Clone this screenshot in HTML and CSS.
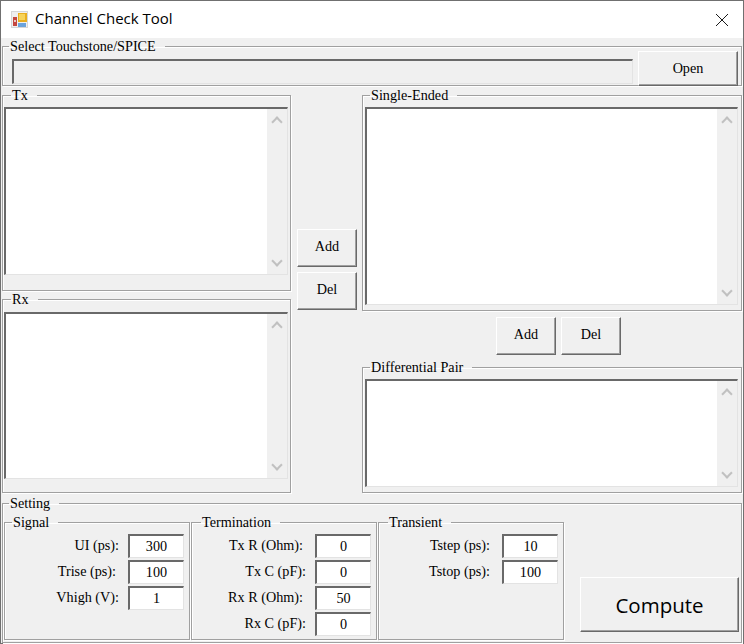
FILE: index.html
```html
<!DOCTYPE html>
<html>
<head>
	<title>Channel Check Tool</title>
	<link rel="stylesheet" href="styles.css">
</head>
<body>
	<div class="window">
		<!--Title bar-->
		<div class="titlebar">
			<svg class="app_icon" width="17" height="17" viewBox="0 0 17 17">
				<rect x="0" y="0" width="17" height="17" fill="#d6d6d6"/>
				<rect x="1" y="1" width="15" height="15" fill="#efefef"/>
				<rect x="2" y="6" width="4" height="9" fill="#c4473f"/>
				<rect x="3" y="9" width="2" height="2" fill="#ecc9c2"/>
				<rect x="7" y="2" width="9" height="9" fill="#e9ae1f"/>
				<rect x="8" y="3" width="6" height="6" fill="#f7d35a"/>
				<rect x="7" y="12" width="8" height="4" fill="#6ba3dc"/>
			</svg>
			<span class="title">Channel Check Tool</span>
			<svg class="close_icon" width="14" height="14" viewBox="0 0 14 14">
				<path d="M1 1L13 13M13 1L1 13" stroke="#1a1a1a" stroke-width="1" fill="none"/>
			</svg>
		</div>

		<!--File select-->
		<fieldset class="group select_group">
			<legend>Select Touchstone/SPICE</legend>
			<div class="select_row">
				<div class="path_box"></div>
				<button class="btn open_btn">Open</button>
			</div>
		</fieldset>

		<!--Ports-->
		<div class="ports">
			<div class="left_col">
				<fieldset class="group tx_group">
					<legend>Tx</legend>
					<div class="listbox tx_list">
						<div class="scroll"><span class="up"></span><span class="down"></span></div>
					</div>
				</fieldset>
				<fieldset class="group rx_group">
					<legend>Rx</legend>
					<div class="listbox rx_list">
						<div class="scroll"><span class="up"></span><span class="down"></span></div>
					</div>
				</fieldset>
			</div>
			<div class="mid_col">
				<button class="btn small_btn">Add</button>
				<button class="btn small_btn">Del</button>
			</div>
			<div class="right_col">
				<fieldset class="group single_group">
					<legend>Single-Ended</legend>
					<div class="listbox single_list">
						<div class="scroll"><span class="up"></span><span class="down"></span></div>
					</div>
				</fieldset>
				<div class="pair_btns">
					<button class="btn small_btn">Add</button>
					<button class="btn small_btn">Del</button>
				</div>
				<fieldset class="group diff_group">
					<legend>Differential Pair</legend>
					<div class="listbox diff_list">
						<div class="scroll"><span class="up"></span><span class="down"></span></div>
					</div>
				</fieldset>
			</div>
		</div>

		<!--Settings-->
		<fieldset class="group setting_group">
			<legend>Setting</legend>
			<div class="setting_row">
				<fieldset class="group sub_group signal">
					<legend>Signal</legend>
					<div class="fields">
						<label>UI (ps):</label><div class="num">300</div>
						<label class="nudge">Trise (ps):</label><div class="num">100</div>
						<label>Vhigh (V):</label><div class="num">1</div>
					</div>
				</fieldset>
				<fieldset class="group sub_group termination">
					<legend>Termination</legend>
					<div class="fields">
						<label class="nudge">Tx R (Ohm):</label><div class="num">0</div>
						<label>Tx C (pF):</label><div class="num">0</div>
						<label class="nudge">Rx R (Ohm):</label><div class="num">50</div>
						<label>Rx C (pF):</label><div class="num">0</div>
					</div>
				</fieldset>
				<fieldset class="group sub_group transient">
					<legend>Transient</legend>
					<div class="fields">
						<label>Tstep (ps):</label><div class="num">10</div>
						<label>Tstop (ps):</label><div class="num">100</div>
					</div>
				</fieldset>
				<button class="btn compute_btn">Compute</button>
			</div>
		</fieldset>
	</div>
</body>
</html>
```

FILE: styles.css
```css
html, body {
    margin: 0;
    padding: 0;
    overflow: hidden;
}

body {
    font-family: "Liberation Serif", serif;
    font-size: 14.2px;
    color: #000;
}

/* Window frame */
.window {
    box-sizing: border-box;
    width: 744px;
    height: 644px;
    border: 1px solid #707070;
    background-color: #f0f0f0;
}

/* Title bar */
.titlebar {
    display: flex;
    align-items: center;
    height: 37px;
    padding-left: 10px;
    background-color: white;
}
.app_icon {
    margin-right: 7px;
}
.title {
    font-family: "Open Sans", sans-serif;
    font-size: 15px;
    line-height: 17px;
    padding-bottom: 2px;
    color: #000;
}
.close_icon {
    margin-left: auto;
    margin-right: 14px;
}

/* Group boxes */
.group {
    box-sizing: border-box;
    min-width: 0;
    margin: 0;
    padding: 0;
    border: 1px solid #a0a0a0;
    box-shadow: inset 1px 1px 0 #fff, 1px 1px 0 #fff;
}
.group legend {
    margin-left: 7px;
    padding: 0 9px 0 1px;
    height: 16px;
    line-height: 16px;
    white-space: nowrap;
}
.select_group legend, .setting_group > legend {
    margin-left: 6px;
}
.tx_group legend, .rx_group legend {
    margin-left: 8px;
}
.termination legend, .transient legend {
    margin-left: 9px;
}

/* Buttons */
.btn {
    box-sizing: border-box;
    padding: 0;
    font-family: "Liberation Serif", serif;
    font-size: 14.2px;
    color: #000;
    background-color: #f0f0f0;
    border: 1px solid;
    border-color: #fff #696969 #696969 #fff;
    box-shadow: inset -1px -1px 0 #a0a0a0;
}
.small_btn {
    width: 60px;
    height: 38px;
    padding-bottom: 4px;
}

/* File select */
.select_group {
    width: 740px;
    height: 48px;
    margin-left: 1px;
}
.select_row {
    display: flex;
    align-items: flex-start;
    margin-top: -3px;
    padding-left: 9px;
}
.path_box {
    box-sizing: border-box;
    width: 621px;
    height: 25px;
    margin-top: 8px;
    border: 2px solid;
    border-color: #696969 #e3e3e3 #e3e3e3 #696969;
    border-right-width: 1px;
    border-bottom-width: 1px;
}
.open_btn {
    width: 100px;
    height: 35px;
    margin-left: 5px;
}

/* Ports */
.ports {
    display: flex;
    margin-left: 1px;
    margin-top: 1px;
}
.left_col {
    width: 289px;
}
.tx_group {
    height: 204px;
}
.rx_group {
    height: 202px;
}
.mid_col {
    display: flex;
    flex-direction: column;
    gap: 5px;
    width: 60px;
    margin-left: 6px;
    padding-top: 142px;
}
.right_col {
    width: 380px;
    margin-left: 5px;
}
.single_group {
    height: 224px;
}
.pair_btns {
    display: flex;
    gap: 5px;
    height: 42px;
    padding-top: 6px;
    padding-left: 134px;
}
.diff_group {
    height: 134px;
}

/* List boxes with a disabled scroll bar */
.listbox {
    position: relative;
    box-sizing: border-box;
    margin-top: 4px;
    margin-left: 1px;
    background-color: white;
    border: 2px solid;
    border-color: #696969 #e3e3e3 #e3e3e3 #696969;
    border-right-width: 1px;
    border-bottom-width: 1px;
}
.tx_list, .rx_list {
    width: 284px;
}
.tx_list {
    height: 168px;
}
.rx_list {
    height: 167px;
    margin-top: 5px;
}
.single_list {
    width: 373px;
    margin-left: 2px;
    height: 198px;
}
.diff_list {
    width: 373px;
    margin-left: 2px;
    height: 108px;
}
.scroll {
    position: absolute;
    top: 0;
    right: 0;
    bottom: 0;
    width: 20px;
    background-color: #f0f0f0;
}
.up, .down {
    position: absolute;
    left: 6px;
    width: 6px;
    height: 6px;
    border: solid #c0c0c0;
    border-width: 2px 0 0 2px;
}
.up {
    top: 9px;
    transform: rotate(45deg);
}
.down {
    bottom: 9px;
    transform: rotate(225deg);
}

/* Settings */
.setting_group {
    width: 740px;
    height: 148px;
    margin-left: 1px;
    margin-top: 2px;
}
.setting_row {
    display: flex;
    align-items: flex-start;
    padding-left: 1px;
    margin-top: 3px;
}
.sub_group {
    width: 186px;
    height: 126px;
    margin-right: 1px;
}
.fields {
    display: grid;
    grid-template-columns: 1fr 56px;
    gap: 2px 9px;
    margin-top: 4px;
    padding-right: 5px;
    grid-auto-rows: 24px;
}
.fields label {
    justify-self: end;
    line-height: 22px;
}
.fields label.nudge {
    margin-right: 3px;
}
.transient label {
    margin-right: 3px;
}
.num {
    box-sizing: border-box;
    height: 24px;
    line-height: 21px;
    text-align: center;
    background-color: white;
    border: 2px solid;
    border-color: #696969 #e3e3e3 #e3e3e3 #696969;
    border-right-width: 1px;
    border-bottom-width: 1px;
}
.compute_btn {
    width: 159px;
    height: 55px;
    margin-top: 63px;
    margin-left: 15px;
    font-family: "Open Sans", sans-serif;
    font-size: 20.5px;
}
```
